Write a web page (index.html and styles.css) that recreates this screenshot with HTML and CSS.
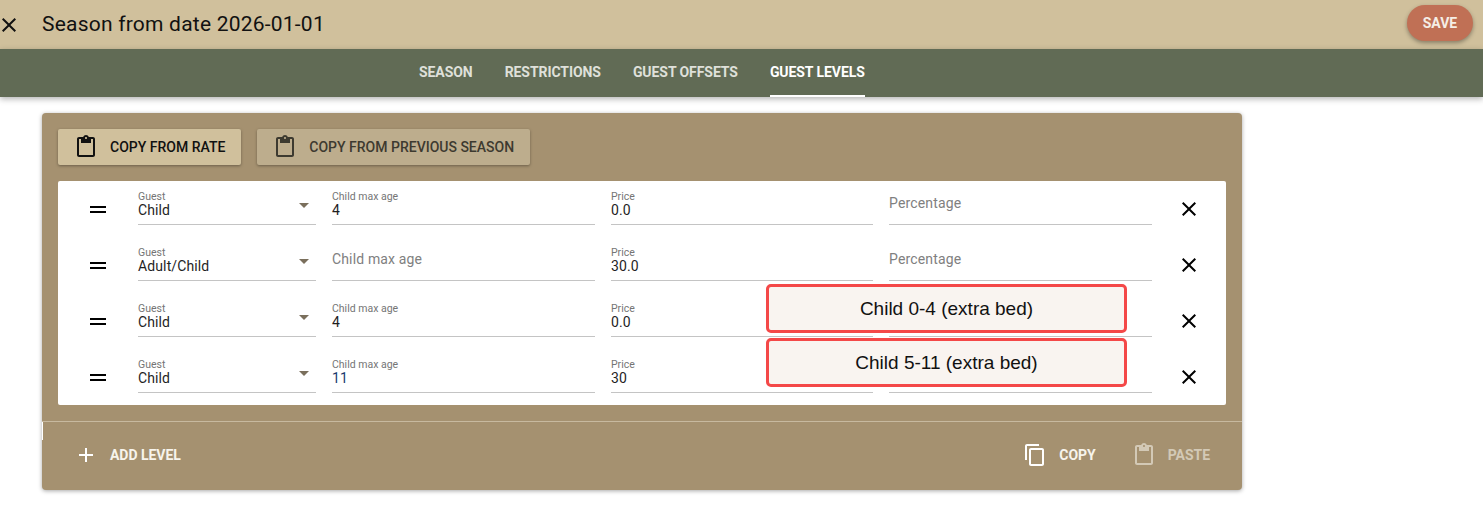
FILE: index.html
```html
<!DOCTYPE html>
<html lang="en">
<head>
<meta charset="utf-8">
<title>Season</title>
<link rel="stylesheet" href="styles.css">
</head>
<body>
<header class="appbar">
  <svg class="close-top" viewBox="0 0 24 24"><path d="M19 6.41 17.59 5 12 10.59 6.41 5 5 6.41 10.59 12 5 17.59 6.41 19 12 13.41 17.59 19 19 17.59 13.41 12z"/></svg>
  <h1 class="title">Season from date 2026-01-01</h1>
  <button class="save">SAVE</button>
</header>
<nav class="tabs">
  <a class="tab">SEASON</a>
  <a class="tab">RESTRICTIONS</a>
  <a class="tab">GUEST OFFSETS</a>
  <a class="tab active">GUEST LEVELS</a>
</nav>
<main class="content">
  <section class="card">
    <span class="tick"></span>
    <div class="actions">
      <button class="raised">
        <svg class="icon" viewBox="0 0 24 24"><path d="M19 2h-4.2C14.4.8 13.3 0 12 0s-2.4.8-2.8 2H5c-1.1 0-2 .9-2 2v16c0 1.1.9 2 2 2h14c1.1 0 2-.9 2-2V4c0-1.1-.9-2-2-2zm-7 0c.55 0 1 .45 1 1s-.45 1-1 1-1-.45-1-1 .45-1 1-1zm7 18H5V4h2v4h10V4h2v16z"/></svg>
        COPY FROM RATE
      </button>
      <button class="raised muted">
        <svg class="icon" viewBox="0 0 24 24"><path d="M19 2h-4.2C14.4.8 13.3 0 12 0s-2.4.8-2.8 2H5c-1.1 0-2 .9-2 2v16c0 1.1.9 2 2 2h14c1.1 0 2-.9 2-2V4c0-1.1-.9-2-2-2zm-7 0c.55 0 1 .45 1 1s-.45 1-1 1-1-.45-1-1 .45-1 1-1zm7 18H5V4h2v4h10V4h2v16z"/></svg>
        COPY FROM PREVIOUS SEASON
      </button>
    </div>
    <div class="list">
      <div class="row">
        <span class="drag"></span>
        <div class="field guest"><label>Guest</label><span class="value">Child</span><i class="caret"></i></div>
        <div class="field"><label>Child max age</label><span class="value">4</span></div>
        <div class="field"><label>Price</label><span class="value">0.0</span></div>
        <div class="field"><span class="placeholder">Percentage</span></div>
        <svg class="remove" viewBox="0 0 24 24"><path d="M19 6.41 17.59 5 12 10.59 6.41 5 5 6.41 10.59 12 5 17.59 6.41 19 12 13.41 17.59 19 19 17.59 13.41 12z"/></svg>
      </div>
      <div class="row">
        <span class="drag"></span>
        <div class="field guest"><label>Guest</label><span class="value">Adult/Child</span><i class="caret"></i></div>
        <div class="field"><span class="placeholder">Child max age</span></div>
        <div class="field"><label>Price</label><span class="value">30.0</span></div>
        <div class="field"><span class="placeholder">Percentage</span></div>
        <svg class="remove" viewBox="0 0 24 24"><path d="M19 6.41 17.59 5 12 10.59 6.41 5 5 6.41 10.59 12 5 17.59 6.41 19 12 13.41 17.59 19 19 17.59 13.41 12z"/></svg>
      </div>
      <div class="row">
        <span class="drag"></span>
        <div class="field guest"><label>Guest</label><span class="value">Child</span><i class="caret"></i></div>
        <div class="field"><label>Child max age</label><span class="value">4</span></div>
        <div class="field"><label>Price</label><span class="value">0.0</span></div>
        <div class="field"></div>
        <svg class="remove" viewBox="0 0 24 24"><path d="M19 6.41 17.59 5 12 10.59 6.41 5 5 6.41 10.59 12 5 17.59 6.41 19 12 13.41 17.59 19 19 17.59 13.41 12z"/></svg>
      </div>
      <div class="row">
        <span class="drag"></span>
        <div class="field guest"><label>Guest</label><span class="value">Child</span><i class="caret"></i></div>
        <div class="field"><label>Child max age</label><span class="value edited">11</span></div>
        <div class="field"><label>Price</label><span class="value">30</span></div>
        <div class="field"></div>
        <svg class="remove" viewBox="0 0 24 24"><path d="M19 6.41 17.59 5 12 10.59 6.41 5 5 6.41 10.59 12 5 17.59 6.41 19 12 13.41 17.59 19 19 17.59 13.41 12z"/></svg>
      </div>
      <div class="note note-one">Child 0-4 (extra bed)</div>
      <div class="note note-two">Child 5-11 (extra bed)</div>
    </div>
    <footer class="card-foot">
      <button class="flat">
        <svg class="icon" viewBox="0 0 24 24"><path d="M19 13h-6v6h-2v-6H5v-2h6V5h2v6h6v2z"/></svg>
        ADD LEVEL
      </button>
      <div class="foot-right">
        <button class="flat">
          <svg class="icon" viewBox="0 0 24 24"><path d="M16 1H4c-1.1 0-2 .9-2 2v14h2V3h12V1zm3 4H8c-1.1 0-2 .9-2 2v14c0 1.1.9 2 2 2h11c1.1 0 2-.9 2-2V7c0-1.1-.9-2-2-2zm0 16H8V7h11v14z"/></svg>
          COPY
        </button>
        <button class="flat disabled">
          <svg class="icon" viewBox="0 0 24 24"><path d="M19 2h-4.2C14.4.8 13.3 0 12 0s-2.4.8-2.8 2H5c-1.1 0-2 .9-2 2v16c0 1.1.9 2 2 2h14c1.1 0 2-.9 2-2V4c0-1.1-.9-2-2-2zm-7 0c.55 0 1 .45 1 1s-.45 1-1 1-1-.45-1-1 .45-1 1-1zm7 18H5V4h2v4h10V4h2v16z"/></svg>
          PASTE
        </button>
      </div>
    </footer>
  </section>
</main>
</body>
</html>
```
FILE: styles.css
```css
* { box-sizing: border-box; }
html, body { margin: 0; padding: 0; }
body {
  width: 1483px;
  height: 522px;
  overflow: hidden;
  background: #fff;
  font-family: Roboto, "Liberation Sans", sans-serif;
  color: #1a1a1a;
}
button { font-family: inherit; border: 0; background: none; cursor: pointer; padding: 0; }

.appbar {
  height: 49px;
  background: #d0c09c;
  display: flex;
  align-items: center;
  padding: 0 16px 0 0;
}
.close-top { width: 24px; height: 24px; margin-left: -3px; fill: #111; flex: none; }
.title {
  margin: 0 0 0 21px;
  font-size: 21px;
  letter-spacing: .22px;
  line-height: 49px;
  font-weight: 400;
  color: #111;
  flex: 1;
}
.save {
  width: 66px;
  height: 36px;
  margin: -3px -6px 0 0;
  border-radius: 18px;
  background: #c07055;
  color: #f5eee6;
  font-size: 14px;
  font-weight: 700;
  box-shadow: 0 2px 4px rgba(0,0,0,.35);
}

.tabs {
  height: 48px;
  background: #616b55;
  display: flex;
  gap: 32px;
  padding-left: 419px;
  box-shadow: 0 2px 6px rgba(0,0,0,.3);
}
.tab {
  height: 48px;
  line-height: 46px;
  font-size: 14px;
  font-weight: 700;
  color: #dfe0da;
  letter-spacing: -.07px;
}
.tab.active { color: #fff; border-bottom: 2px solid #fff; }

.content { padding: 16px 0 0 42px; }
.card {
  position: relative;
  width: 1200px;
  height: 377px;
  background: #a59170;
  border-radius: 4px;
  box-shadow: 0 1px 4px rgba(0,0,0,.35);
  padding: 16px;
}
.tick { position: absolute; left: 0; top: 309px; width: 1px; height: 18px; background: #fff; }

.actions { display: flex; gap: 16px; margin-bottom: 16px; }
.raised {
  height: 36px;
  display: flex;
  align-items: center;
  gap: 12px;
  padding: 0 16px;
  border-radius: 2px;
  background: #d0c09c;
  color: #111;
  font-size: 14px;
  font-weight: 500;
  box-shadow: 0 1px 3px rgba(0,0,0,.35);
}
.raised.muted { background: #bdad8d; color: #3d3a30; }
.raised .icon { fill: #111; }
.raised.muted .icon { fill: #3d3a30; }
.icon { width: 24px; height: 24px; flex: none; }

.list {
  position: relative;
  background: #fff;
  border-radius: 2px;
  height: 224px;
}
.row {
  height: 56px;
  display: grid;
  grid-template-columns: 178px 263px 262px 263px;
  column-gap: 16px;
  padding-left: 80px;
  position: relative;
}
.drag {
  position: absolute;
  left: 32px;
  top: 25px;
  width: 16px;
  height: 7px;
  border-top: 2px solid #000;
  border-bottom: 2px solid #000;
}
.field {
  position: relative;
  height: 44px;
  border-bottom: 1px solid #c4c4c4;
  padding-top: 10px;
}
.field label {
  display: block;
  font-size: 10.5px;
  line-height: 12px;
  margin-bottom: -1px;
  color: #757575;
}
.value {
  display: block;
  font-size: 14px;
  letter-spacing: .12px;
  line-height: 16px;
  color: #1f1f1f;
}
.value.edited { color: #1c3a6e; }
.placeholder {
  display: block;
  font-size: 14px;
  letter-spacing: .15px;
  line-height: 16px;
  padding-top: 4px;
  color: #808080;
}
.caret {
  position: absolute;
  right: 7px;
  top: 22px;
  border-left: 5px solid transparent;
  border-right: 5px solid transparent;
  border-top: 5px solid #7a6f5c;
}
.remove {
  position: absolute;
  left: 1119px;
  top: 16px;
  width: 24px;
  height: 24px;
  fill: #000;
}
.note {
  position: absolute;
  left: 708px;
  width: 361px;
  height: 49px;
  display: flex;
  align-items: center;
  justify-content: center;
  background: #f9f4f0;
  border: 3.5px solid #f44848;
  border-radius: 5px;
  font-family: "Liberation Sans", Arial, sans-serif;
  font-size: 19px;
  color: #111;
}
.note-one { top: 103px; }
.note-two { top: 157px; }

.card-foot {
  position: absolute;
  left: 0;
  right: 0;
  top: 308px;
  height: 67px;
  border-top: 1px solid #c7b99f;
  display: flex;
  justify-content: space-between;
  align-items: center;
  padding: 0 32px 0 32px;
}
.foot-right { display: flex; gap: 36px; }
.flat {
  display: flex;
  align-items: center;
  gap: 12px;
  color: #f7f4ec;
  font-size: 14px;
  font-weight: 700;
  letter-spacing: -.04px;
}
.flat .icon { fill: #fff; }
.flat.disabled { color: #d3c9b6; }
.flat.disabled .icon { fill: #d3c9b6; }
```
